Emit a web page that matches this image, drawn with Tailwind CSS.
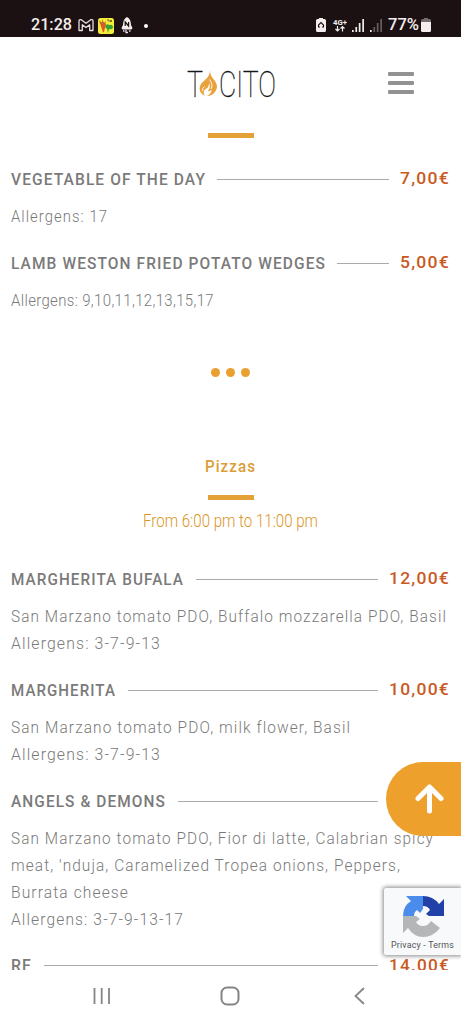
<!DOCTYPE html>
<html lang="en">
<head>
<meta charset="utf-8">
<meta name="viewport" content="width=device-width">
<title>Tacito</title>
<script src="https://cdn.jsdelivr.net/npm/@tailwindcss/browser@4"></script>
</head>
<body class="w-[461px] h-[1024px] overflow-hidden bg-white font-['Roboto','Liberation_Sans',sans-serif] text-[#7a7a7a]">
<div class="relative flex flex-col h-[1024px]">
  <div class="h-[37px] shrink-0 bg-[#1c1112] text-white flex items-end pb-[3px] pl-[31px] pr-[30px]">
    <span data-w="41" data-h="18" data-ls="0" class="text-[17px] font-medium h-[18px] text-[#f4eeee]">21:28</span>
    <svg class="ml-[6px] mb-[2px]" width="16" height="14" viewBox="0 0 16 14" fill="none" stroke="#e8e0e0" stroke-width="1.3" stroke-linejoin="round"><path d="M1 3.2Q1 1 3.2 1.7L8 5.3l4.800-3.600Q15 1 15 3.200V12.500h-3.300V6.800L8 9.600 4.300 6.800v5.700H1z"/></svg>
    <svg class="ml-[4px]" width="16" height="16" viewBox="0 0 16 16"><rect width="16" height="16" rx="2.500" fill="#f3ee3a"/><path d="M2 5q4-2 6 1l-2 8q-1 1-1.500-1z" fill="#e5532a"/><path d="M1 2l3 3 0-4 2 4 2-2-1 4-5-1z" fill="#c3672b"/><path d="M7 9q1-4 4-2 4-1 4 3-2 2-4 1l-1 4-1-4z" fill="#36a235"/><path d="M9 2h2v2M12 2l2 2M14 2l-2 2" stroke="#806d20" fill="none"/></svg>
    <svg class="ml-[7px]" width="12" height="17" viewBox="0 0 12 17"><path d="M6 0Q10 2 10 8l1.500 3-1 1.500h-9L.5 11 2 8Q2 2 6 0z" fill="#f3eeee"/><path d="M4.200 9V5l3.400 4V5" fill="none" stroke="#1c1112" stroke-width="1.200"/><path d="M2 14h1.500m1 1.500H7m1-1.500h1.500M5 13v3" stroke="#e8e0e0" stroke-width="1.300"/></svg>
    <span class="ml-[11px] mb-[6px] size-[4px] rounded-full bg-white"></span>
    <div class="flex-1"></div>
    <svg class="mb-[2px]" width="10" height="14" viewBox="0 0 10 14"><path d="M3 0h4v1h1.500Q10 1 10 2.500v10Q10 14 8.500 14h-7Q0 14 0 12.500v-10Q0 1 1.500 1H3z" fill="#f4eeee"/><path d="M2.500 9V7L5 4.500 7.500 7v2M2 9h2m2 0h2" fill="none" stroke="#1c1112" stroke-width="1.100"/></svg>
    <svg class="ml-[7px] mb-[1px]" width="14" height="15" viewBox="0 0 14 15"><text x="0" y="6.500" font-size="7.500" font-weight="700" fill="#eee" textLength="14" lengthAdjust="spacingAndGlyphs">4G+</text><path d="M4.500 8v5M2.500 11l2 2 2-2M9.500 13.500v-5M7.500 10.500l2-2 2 2" fill="none" stroke="#eee" stroke-width="1.200"/></svg>
    <svg class="ml-[5px] mb-[2px]" width="12" height="13" viewBox="0 0 12 13" fill="#eee"><path d="M0 11h1.700v2H0zM3.400 8h1.700v5H3.400zM6.800 4h1.700v9H6.800zM10.300 0H12v13h-1.700z"/></svg>
    <svg class="ml-[6px] mb-[2px]" width="12" height="13" viewBox="0 0 12 13"><path fill="#eee" d="M0 11h1.700v2H0z"/><path fill="#655c5c" d="M3.400 8h1.700v5H3.400zM6.800 4h1.700v9H6.800zM10.300 0H12v13h-1.700z"/></svg>
    <span data-w="31" data-h="18" data-ls="0" class="ml-[6px] text-[17px] font-medium h-[18px] text-[#f4eeee]">77%</span>
    <svg class="ml-[2px] mb-[2px]" width="10" height="14" viewBox="0 0 10 14"><path d="M3 0h4v1h1.500Q10 1 10 2.500V5H0V2.500Q0 1 1.500 1H3z" fill="#756c6c"/><path d="M0 4h10v8.500Q10 14 8.500 14h-7Q0 14 0 12.500z" fill="#f4eeee"/></svg>
  </div>

  <header class="h-[92px] shrink-0 flex items-center pl-[187px] pr-[47px] justify-between">
    <svg class="overflow-visible" width="90" height="32" viewBox="0 0 90 32" fill="#171717" font-family="Roboto" font-weight="100" font-size="37">
      <g stroke="#171717" stroke-width=".35">
      <text x="0" y="30" textLength="16" lengthAdjust="spacingAndGlyphs">T</text>
      <text x="32" y="30" textLength="57" lengthAdjust="spacingAndGlyphs">CITO</text></g>
      <path d="M23 3Q23 9 28 14 32 20 28 25 25 29 20 29 25 26 24.500 23 22 25 21 24 24 20 22 16 22 21 18.500 22 15 24 18 29 11 25 13 19 14 16 18 13 23 9 23 3z" fill="#e9a13b"/>
      <path d="M22.500 12.500Q26.500 18 24 22M15.500 24Q15 21 17.500 19.500" fill="none" stroke="#fff" stroke-width=".9"/>
    </svg>
    <div class="w-[26px] flex flex-col gap-[5px] pb-[1px]"><i class="h-[4px] rounded-[1px] bg-[#929292]"></i><i class="h-[4px] rounded-[1px] bg-[#929292]"></i><i class="h-[4px] rounded-[1px] bg-[#929292]"></i></div>
  </header>

  <main class="h-[841px] shrink-0 overflow-hidden pt-[4px]">
    <div class="mx-auto w-[46px] h-[5px] bg-[#e3a137]"></div>
    <section class="px-[11px] pt-[28px] flex flex-col gap-[20px]">
      <article>
        <h3 class="h-[27px] flex items-center text-[17px] font-medium"><span data-w="195">VEGETABLE OF THE DAY</span><i class="h-px bg-[#aaa] flex-1 ml-[11px] mr-[11px]"></i><b data-w="50" class="font-medium text-[#c95a1f] -mt-[2px]">7,00€</b></h3>
        <p class="mt-[10px] text-[17px] leading-[27px] font-light"><span data-w="97">Allergens: 17</span></p>
      </article>
      <article>
        <h3 class="h-[27px] flex items-center text-[17px] font-medium"><span data-w="315">LAMB WESTON FRIED POTATO WEDGES</span><i class="h-px bg-[#aaa] flex-1 ml-[11px] mr-[11px]"></i><b data-w="50" class="font-medium text-[#c95a1f] -mt-[2px]">5,00€</b></h3>
        <p class="mt-[10px] text-[17px] leading-[27px] font-light"><span data-w="203" data-ls="0.4">Allergens: 9,10,11,12,13,15,17</span></p>
      </article>
    </section>
    <div class="mt-[54px] flex justify-center gap-[6px]"><i class="size-[9px] rounded-full bg-[#e9a030]"></i><i class="size-[9px] rounded-full bg-[#e9a030]"></i><i class="size-[9px] rounded-full bg-[#e9a030]"></i></div>
    <h2 class="mt-[76px] h-[27px] leading-[27px] flex justify-center text-[17px] font-medium text-[#dc9d35]"><span data-w="51">Pizzas</span></h2>
    <div class="mt-[15px] mx-auto w-[46px] h-[5px] bg-[#e3a137]"></div>
    <p class="mt-[8px] h-[27px] leading-[27px] flex justify-center text-[18px] font-light text-[#d99525]"><span data-w="175" data-ls="0">From 6:00 pm to 11:00 pm</span></p>
    <section class="px-[11px] pt-[31px] flex flex-col gap-[20px]">
      <article>
        <h3 class="h-[27px] flex items-center text-[17px] font-medium"><span data-w="173">MARGHERITA BUFALA</span><i class="h-px bg-[#aaa] flex-1 ml-[12px] mr-[11px]"></i><b data-w="61" class="font-medium text-[#c95a1f] -mt-[2px]">12,00€</b></h3>
        <p class="mt-[10px] text-[17px] leading-[27px] font-light"><span data-w="436">San Marzano tomato PDO, Buffalo mozzarella PDO, Basil</span><br><span data-w="150">Allergens: 3-7-9-13</span></p>
      </article>
      <article>
        <h3 class="h-[27px] flex items-center text-[17px] font-medium"><span data-w="105">MARGHERITA</span><i class="h-px bg-[#aaa] flex-1 ml-[12px] mr-[11px]"></i><b data-w="61" class="font-medium text-[#c95a1f] -mt-[2px]">10,00€</b></h3>
        <p class="mt-[10px] text-[17px] leading-[27px] font-light"><span data-w="340">San Marzano tomato PDO, milk flower, Basil</span><br><span data-w="150">Allergens: 3-7-9-13</span></p>
      </article>
      <article>
        <h3 class="h-[27px] flex items-center text-[17px] font-medium"><span data-w="155">ANGELS &amp; DEMONS</span><i class="h-px bg-[#aaa] flex-1 ml-[12px] mr-[72px]"></i></h3>
        <p class="mt-[10px] text-[17px] leading-[27px] font-light"><span data-w="423">San Marzano tomato PDO, Fior di latte, Calabrian spicy</span><br><span data-w="390">meat, 'nduja, Caramelized Tropea onions, Peppers,</span><br><span data-w="118">Burrata cheese</span><br><span data-w="173">Allergens: 3-7-9-13-17</span></p>
      </article>
      <article>
        <h3 class="h-[27px] -mt-px flex items-center text-[17px] font-medium"><span data-w="21">RF</span><i class="h-px bg-[#aaa] flex-1 ml-[12px] mr-[11px]"></i><b data-w="61" class="font-medium text-[#c95a1f] -mt-[1px]">14.00€</b></h3>
      </article>
    </section>
  </main>

  <nav class="h-[54px] shrink-0 bg-white flex items-center pb-[2px] pl-[93px]">
    <svg width="18" height="18" viewBox="0 0 18 18" stroke="#858585" stroke-width="1.800"><path d="M1.500 1v16M8.700 1v16M16 1v16"/></svg>
    <svg class="ml-[109px]" width="20" height="20" viewBox="0 0 20 20" fill="none" stroke="#858585" stroke-width="2"><rect x="1.500" y="1.500" width="17" height="17" rx="5.500"/></svg>
    <svg class="ml-[114px]" width="11" height="18" viewBox="0 0 11 18" fill="none" stroke="#858585" stroke-width="1.800"><path d="M10 1L1.500 9l8.500 8"/></svg>
  </nav>

  <div class="absolute left-[386px] top-[762px] w-[75px] h-[74px] rounded-l-full bg-[#eea02c] flex items-center pl-[28px]">
    <svg class="mt-[-1px]" width="30" height="32" viewBox="0 0 30 32" fill="none" stroke="#fff" stroke-width="5" stroke-linecap="round" stroke-linejoin="round"><path d="M15.500 28V4M4 15.500L15.500 4 27 15.500"/></svg>
  </div>
  <div class="absolute left-[384px] top-[888px] w-[77px] h-[67px] bg-[#f8f9fa] rounded-l-[2px] shadow-[0_0_4px_1px_#888] flex flex-col items-center pt-[6px]">
    <svg width="44" height="44" viewBox="0 0 44 44"><path d="M43 22V5l-5 5Q32 2 22 2v10q5 0 7 4l-4 4 3 2z" fill="#2141a8"/><path d="M22 2H5l5 5Q2 12 2 22h11q0-4 3-6l3 3 3-4z" fill="#4a8cec"/><path d="M2 22v17l5-5q6 9 15 9 10 0 17-9l-9-7q-3 5-8 5-5 0-7-4l4-3-4-3z" fill="#b5b6b7"/></svg>
    <span data-w="63" data-h="14" data-ls="0.2" class="text-[9px] text-[#555]">Privacy - Terms</span>
  </div>
</div>
<script>
// Set each label on a line of fixed width.
document.querySelectorAll('[data-w]').forEach(function (el) {
  var ns = 'http://www.w3.org/2000/svg', w = el.dataset.w, h = el.dataset.h || 27;
  var svg = document.createElementNS(ns, 'svg'), text = document.createElementNS(ns, 'text');
  svg.setAttribute('width', w);
  svg.setAttribute('height', h);
  svg.setAttribute('style', 'display:block;overflow:visible');
  text.setAttribute('y', '50%');
  text.setAttribute('dy', '.3em');
  text.setAttribute('fill', 'currentColor');
  text.setAttribute('textLength', w);
  text.setAttribute('lengthAdjust', 'spacingAndGlyphs');
  text.style.letterSpacing = (el.dataset.ls || 1.2) + 'px';
  text.textContent = el.textContent;
  svg.appendChild(text);
  el.textContent = '';
  el.style.display = 'inline-block';
  el.style.flexShrink = 0;
  el.style.verticalAlign = 'top';
  el.appendChild(svg);
});
</script>
</body>
</html>
